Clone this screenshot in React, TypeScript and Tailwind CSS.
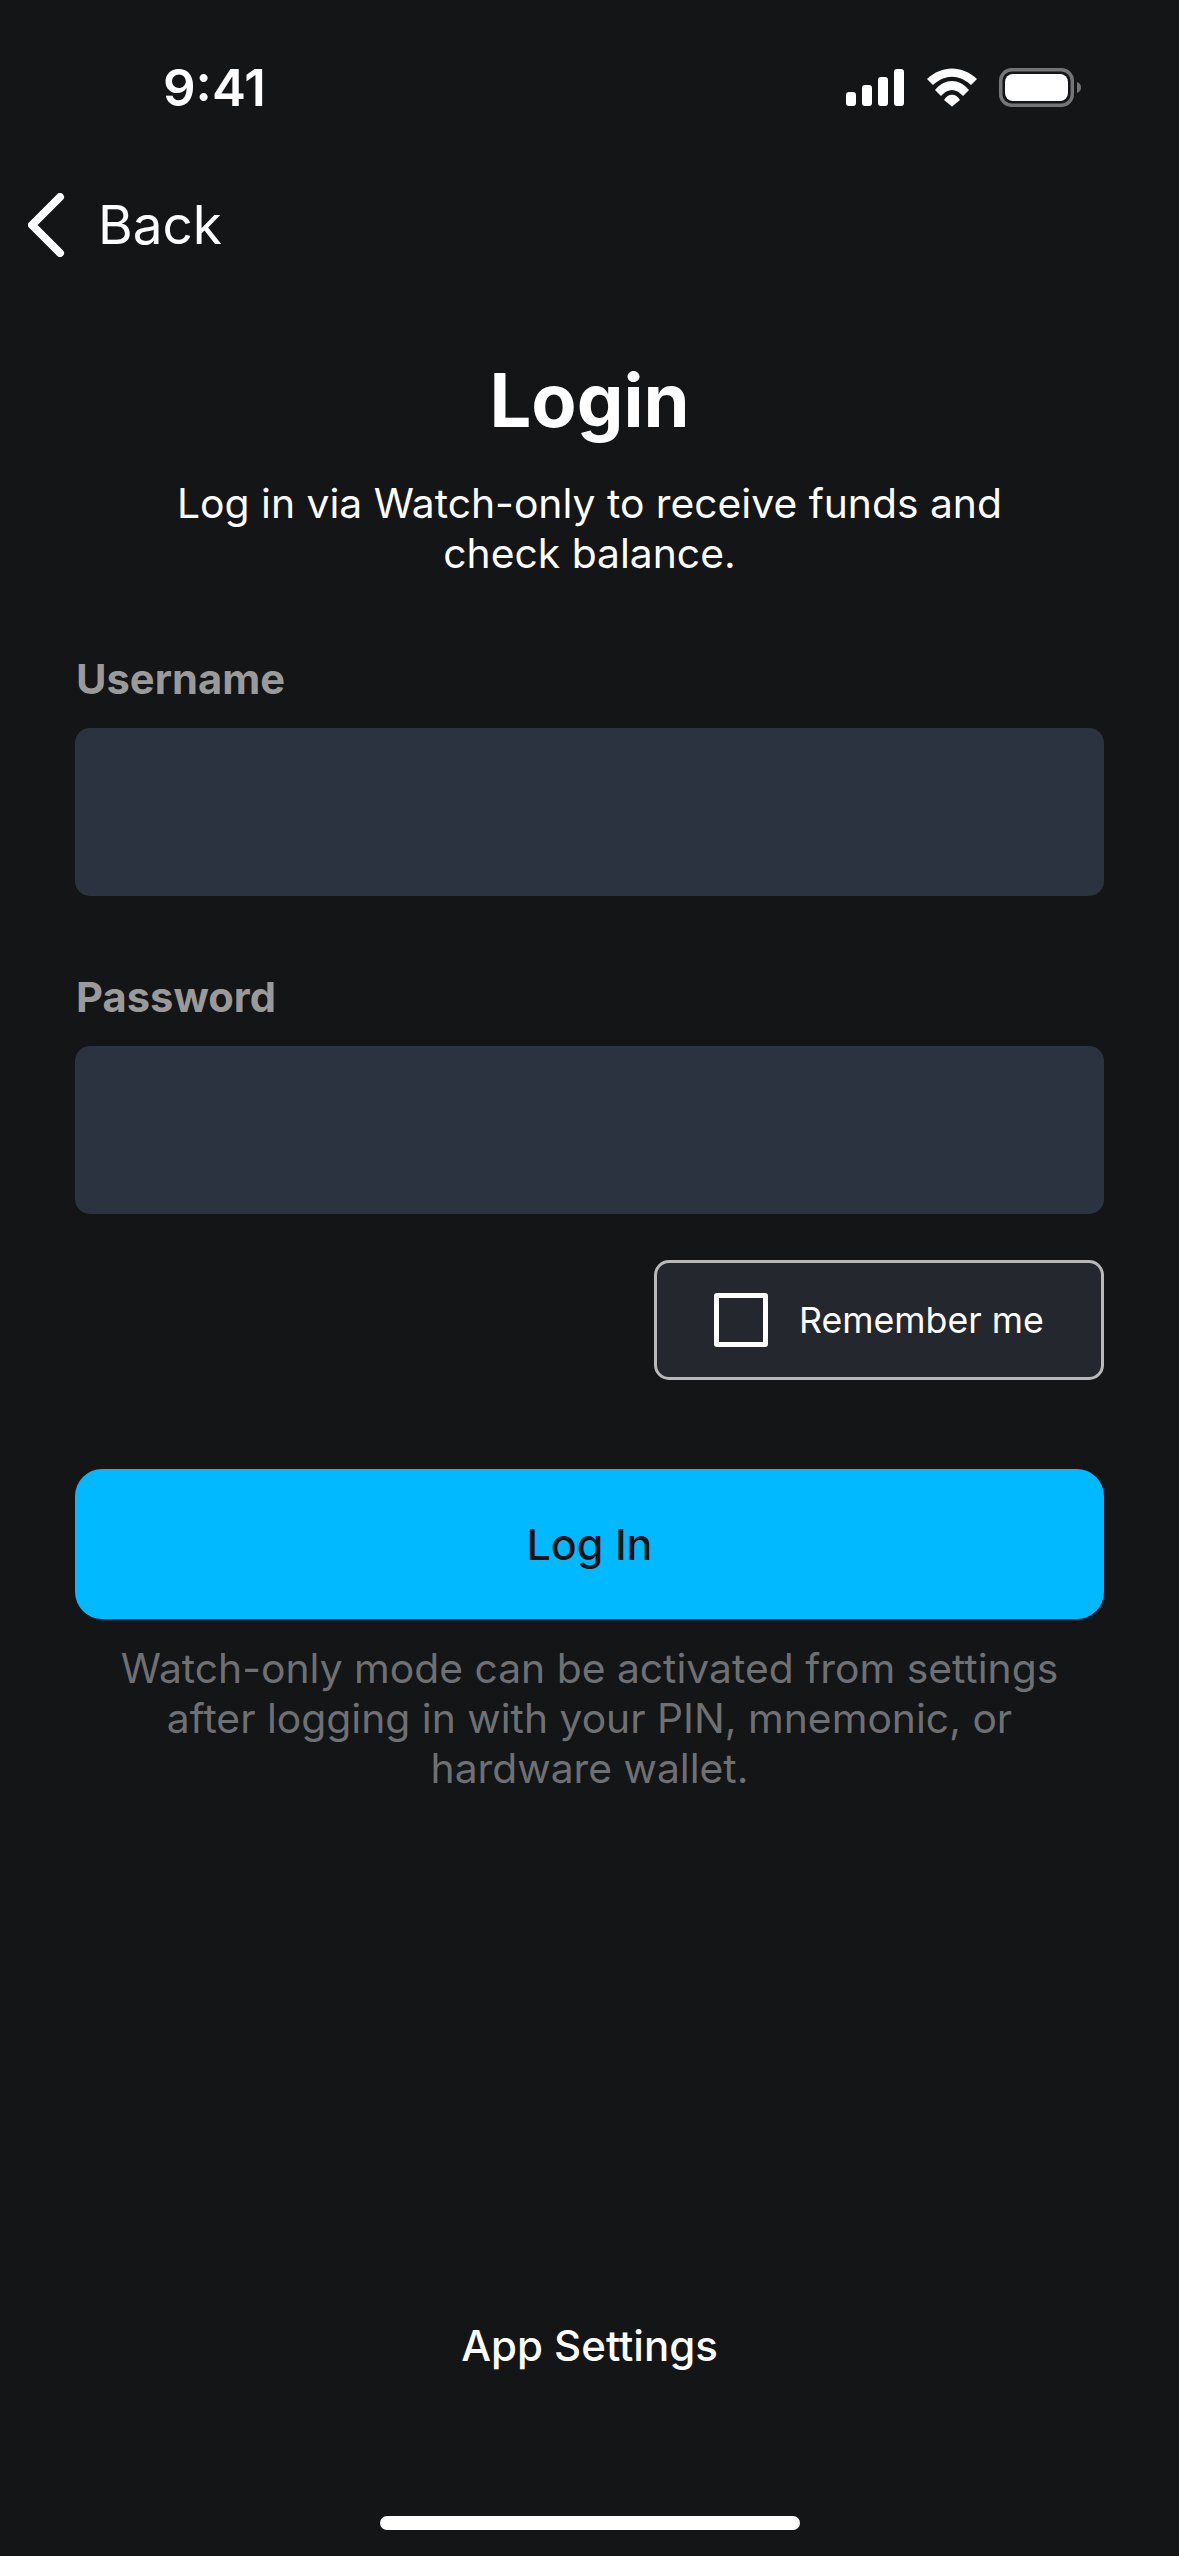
import * as React from "react";

function StatusBar() {
    return (
        <div className="flex h-[115px] items-center justify-between pt-[60px] pl-[163px] pr-[89px]">
            <span className="text-[51px] leading-[62px] font-semibold text-white">9:41</span>
            <svg width="250" height="55" viewBox="0 0 250 55">
                <g fill="#fff">
                    <rect x="6" y="32" width="10" height="14" rx="3" />
                    <rect x="22" y="25" width="10" height="21" rx="3" />
                    <rect x="38" y="17" width="10" height="29" rx="3" />
                    <rect x="54" y="9" width="10" height="37" rx="3" />
                    <path d="M87 19 C102 5 122 5 137 19 L131 25 C119 14 105 14 93 25 Z" />
                    <path d="M95 30 C105 18 119 18 129 30 L123 36 C116 28 108 28 101 36 Z" />
                    <path d="M104 40 C108 33 116 33 120 40 L112 46.5 Z" />
                    <rect x="165" y="14" width="63" height="27" rx="8" />
                </g>
                <rect x="160.7" y="9.7" width="71.6" height="35.6" rx="11" fill="none" stroke="#757575" strokeWidth="3.5" />
                <path d="M237 22 C240 23 241 25 241 27.5 C241 30 240 32 237 33 Z" fill="#757575" />
            </svg>
        </div>
    );
}

function Field({ label }: { label: string }) {
    return (
        <div className="flex flex-col">
            <label className="ml-[1px] text-[41.7px] leading-[50px] font-bold text-[#9a9a9a]">{label}</label>
            <div className="mt-[24px] h-[168px] rounded-[15px] bg-[#2c3340]" />
        </div>
    );
}

export default function App() {
    return (
        <div
            className="flex h-[2556px] w-[1179px] flex-col overflow-hidden bg-[#131517] text-white"
            style={{ fontFamily: "Inter, 'Liberation Sans', sans-serif" }}
        >
            <StatusBar />

            <div className="mt-[65px] flex h-[90px] items-center pl-[28px]">
                <svg width="38" height="64" viewBox="0 0 38 64" fill="none">
                    <path d="M32 4 L4 32 L32 60" stroke="#fff" strokeWidth="8" strokeLinecap="round" strokeLinejoin="round" />
                </svg>
                <span className="ml-[32px] text-[53px] leading-[68px] text-white">Back</span>
            </div>

            <main className="flex flex-1 flex-col px-[75px]">
                <h1 className="mt-[85px] text-center text-[74px] leading-[90px] font-bold">Login</h1>
                <p className="mt-[33px] text-center text-[40.8px] leading-[50px]">
                    Log in via Watch-only to receive funds and
                    <br />
                    check balance.
                </p>

                <div className="mt-[76px] flex flex-col gap-[76px]">
                    <Field label="Username" />
                    <Field label="Password" />
                </div>

                <div className="mt-[46px] flex justify-end">
                    <div className="flex h-[120px] w-[450px] items-center rounded-[15px] border-[3px] border-[#b9b9b9] bg-[#24282e] pl-[57px]">
                        <div className="h-[54px] w-[54px] rounded-[3px] border-[5px] border-white" />
                        <span className="ml-[31px] text-[35.7px] leading-[42px] text-white">Remember me</span>
                    </div>
                </div>

                <button className="mt-[89px] h-[150px] rounded-[27px] bg-[#00b9ff] text-[43px] font-medium text-[#131517]">
                    Log In
                </button>

                <p className="mt-[24px] text-center text-[40.8px] leading-[50px] text-[#6f7073]">
                    Watch-only mode can be activated from settings
                    <br />
                    after logging in with your PIN, mnemonic, or
                    <br />
                    hardware wallet.
                </p>

                <div className="mt-auto pb-[125px] text-center text-[42px] leading-[50px] font-medium">App Settings</div>
            </main>

            <div className="flex h-[60px] items-start justify-center pt-[20px]">
                <div className="h-[14px] w-[420px] rounded-full bg-white" />
            </div>
        </div>
    );
}
